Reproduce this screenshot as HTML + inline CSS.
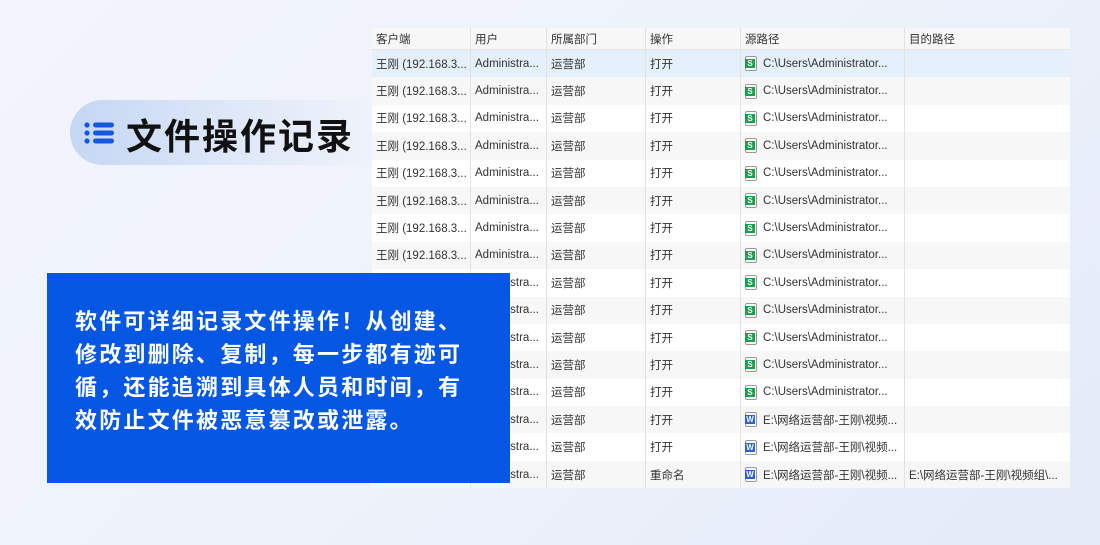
<!DOCTYPE html>
<html><head><meta charset="utf-8"><style>
*{margin:0;padding:0;box-sizing:border-box}
body{width:1100px;height:545px;overflow:hidden;position:relative;background:linear-gradient(135deg,#f2f5fb 0%,#eef2fa 50%,#e3eaf8 100%);font-family:"Liberation Sans","Noto Sans CJK SC",sans-serif}
.tbl{position:absolute;left:372px;top:28px;width:698px;background:#fff}
.row{display:flex;height:27.4px;font-size:11.5px;color:#333;align-items:center}
.row.h{height:22px;background:#fff;border-bottom:1px solid #e6e6e6}
.row:nth-child(odd){background:#f7f7f7}
.row.sel{background:#e5f0fb}
.c{height:100%;border-right:1px solid #e2e2e2;padding-left:4px;display:flex;align-items:center;white-space:nowrap;overflow:hidden}
.c1{width:99px}.c2{width:76px}.c3{width:99px}.c4{width:95px}.c5{width:164px}.c6{width:165px;border-right:none}
.ic{display:inline-block;width:12px;height:15px;border:1px solid #999;border-radius:2px;margin-right:6px;position:relative;background:#fff;flex:none}
.ic i{position:absolute;left:-1px;top:2px;width:10px;height:9px;color:#fff;font-size:8px;font-style:normal;font-weight:bold;text-align:center;line-height:9px}
.s i{background:#1a9f4e}.w i{background:#2a62d4}
.pill{position:absolute;left:70px;top:100px;width:310px;height:65px;border-radius:33px 0 0 33px;background:linear-gradient(90deg,#c4d7f4 0%,#dde7f8 50%,rgba(235,240,250,0) 100%)}
.title{position:absolute;left:126px;top:110px;font-size:36px;font-weight:bold;color:#111;letter-spacing:2px;font-family:"Noto Sans CJK SC",sans-serif;line-height:48px;white-space:nowrap}
.box{position:absolute;left:47px;top:273px;width:463px;height:210px;background:#0457e3;color:#fff;font-size:22px;letter-spacing:2.2px;font-weight:bold;line-height:33px;padding:31px 0 0 28px;font-family:"Noto Sans CJK SC",sans-serif;white-space:nowrap}
</style></head><body>
<div class="tbl">
<div class="row h"><div class="c c1">客户端</div><div class="c c2">用户</div><div class="c c3">所属部门</div><div class="c c4">操作</div><div class="c c5">源路径</div><div class="c c6">目的路径</div></div>
<div class="row sel"><div class="c c1">王刚 (192.168.3...</div><div class="c c2">Administra...</div><div class="c c3">运营部</div><div class="c c4">打开</div><div class="c c5"><span class="ic s"><i>S</i></span>C:\Users\Administrator...</div><div class="c c6"></div></div>
<div class="row"><div class="c c1">王刚 (192.168.3...</div><div class="c c2">Administra...</div><div class="c c3">运营部</div><div class="c c4">打开</div><div class="c c5"><span class="ic s"><i>S</i></span>C:\Users\Administrator...</div><div class="c c6"></div></div>
<div class="row"><div class="c c1">王刚 (192.168.3...</div><div class="c c2">Administra...</div><div class="c c3">运营部</div><div class="c c4">打开</div><div class="c c5"><span class="ic s"><i>S</i></span>C:\Users\Administrator...</div><div class="c c6"></div></div>
<div class="row"><div class="c c1">王刚 (192.168.3...</div><div class="c c2">Administra...</div><div class="c c3">运营部</div><div class="c c4">打开</div><div class="c c5"><span class="ic s"><i>S</i></span>C:\Users\Administrator...</div><div class="c c6"></div></div>
<div class="row"><div class="c c1">王刚 (192.168.3...</div><div class="c c2">Administra...</div><div class="c c3">运营部</div><div class="c c4">打开</div><div class="c c5"><span class="ic s"><i>S</i></span>C:\Users\Administrator...</div><div class="c c6"></div></div>
<div class="row"><div class="c c1">王刚 (192.168.3...</div><div class="c c2">Administra...</div><div class="c c3">运营部</div><div class="c c4">打开</div><div class="c c5"><span class="ic s"><i>S</i></span>C:\Users\Administrator...</div><div class="c c6"></div></div>
<div class="row"><div class="c c1">王刚 (192.168.3...</div><div class="c c2">Administra...</div><div class="c c3">运营部</div><div class="c c4">打开</div><div class="c c5"><span class="ic s"><i>S</i></span>C:\Users\Administrator...</div><div class="c c6"></div></div>
<div class="row"><div class="c c1">王刚 (192.168.3...</div><div class="c c2">Administra...</div><div class="c c3">运营部</div><div class="c c4">打开</div><div class="c c5"><span class="ic s"><i>S</i></span>C:\Users\Administrator...</div><div class="c c6"></div></div>
<div class="row"><div class="c c1">王刚 (192.168.3...</div><div class="c c2">Administra...</div><div class="c c3">运营部</div><div class="c c4">打开</div><div class="c c5"><span class="ic s"><i>S</i></span>C:\Users\Administrator...</div><div class="c c6"></div></div>
<div class="row"><div class="c c1">王刚 (192.168.3...</div><div class="c c2">Administra...</div><div class="c c3">运营部</div><div class="c c4">打开</div><div class="c c5"><span class="ic s"><i>S</i></span>C:\Users\Administrator...</div><div class="c c6"></div></div>
<div class="row"><div class="c c1">王刚 (192.168.3...</div><div class="c c2">Administra...</div><div class="c c3">运营部</div><div class="c c4">打开</div><div class="c c5"><span class="ic s"><i>S</i></span>C:\Users\Administrator...</div><div class="c c6"></div></div>
<div class="row"><div class="c c1">王刚 (192.168.3...</div><div class="c c2">Administra...</div><div class="c c3">运营部</div><div class="c c4">打开</div><div class="c c5"><span class="ic s"><i>S</i></span>C:\Users\Administrator...</div><div class="c c6"></div></div>
<div class="row"><div class="c c1">王刚 (192.168.3...</div><div class="c c2">Administra...</div><div class="c c3">运营部</div><div class="c c4">打开</div><div class="c c5"><span class="ic s"><i>S</i></span>C:\Users\Administrator...</div><div class="c c6"></div></div>
<div class="row"><div class="c c1">王刚 (192.168.3...</div><div class="c c2">Administra...</div><div class="c c3">运营部</div><div class="c c4">打开</div><div class="c c5"><span class="ic w"><i>W</i></span>E:\网络运营部-王刚\视频...</div><div class="c c6"></div></div>
<div class="row"><div class="c c1">王刚 (192.168.3...</div><div class="c c2">Administra...</div><div class="c c3">运营部</div><div class="c c4">打开</div><div class="c c5"><span class="ic w"><i>W</i></span>E:\网络运营部-王刚\视频...</div><div class="c c6"></div></div>
<div class="row"><div class="c c1">王刚 (192.168.3...</div><div class="c c2">Administra...</div><div class="c c3">运营部</div><div class="c c4">重命名</div><div class="c c5"><span class="ic w"><i>W</i></span>E:\网络运营部-王刚\视频...</div><div class="c c6">E:\网络运营部-王刚\视频组\...</div></div>
</div>
<div class="pill"></div>
<svg style="position:absolute;left:84px;top:121px" width="32" height="24" viewBox="0 0 32 24">
<g fill="#1457e0"><circle cx="3" cy="4" r="2.6"/><circle cx="3" cy="12" r="2.6"/><circle cx="3" cy="20" r="2.6"/>
<rect x="9" y="1.5" width="21" height="5" rx="2.5"/><rect x="9" y="9.5" width="21" height="5" rx="2.5"/><rect x="9" y="17.5" width="21" height="5" rx="2.5"/></g></svg>
<div class="title">文件操作记录</div>
<div class="box">软件可详细记录文件操作！从创建、<br>修改到删除、复制，每一步都有迹可<br>循，还能追溯到具体人员和时间，有<br>效防止文件被恶意篡改或泄露。</div>
</body></html>
